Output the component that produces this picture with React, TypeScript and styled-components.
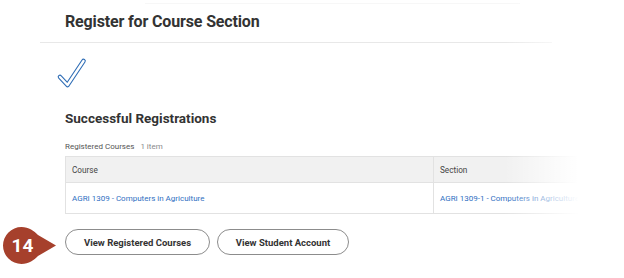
import React from "react";
import styled, { createGlobalStyle } from "styled-components";

const GlobalStyle = createGlobalStyle`
  html, body {
    margin: 0;
    padding: 0;
    background: #ffffff;
  }
  body {
    font-family: Roboto, "Liberation Sans", Arial, sans-serif;
    color: #333333;
  }
`;

const Page = styled.div`
  position: relative;
  width: 624px;
  height: 278px;
  overflow: hidden;
  background: #fff;
`;

const TopRule = styled.div`
  height: 1px;
  margin: 3px 104px 0 145px;
  background: #f7f7f7;
`;

const Header = styled.div`
  margin: 0 72px 0 40px;
  padding: 9px 0 12px 25px;
  border-bottom: 1px solid #e8e8e8;
`;

const Title = styled.h1`
  margin: 0;
  font-size: 16px;
  font-weight: 700;
  letter-spacing: -0.15px;
  color: #333;
  line-height: 17px;
`;

const Content = styled.div`
  padding: 13px 0 0 65px;
`;

const CheckWrap = styled.div`
  margin-left: -9px;
  height: 34px;
`;

const SectionTitle = styled.h2`
  margin: 20px 0 0;
  font-size: 13.5px;
  font-weight: 700;
  color: #333;
  line-height: 16px;
`;

const TableLabel = styled.div`
  margin-top: 16px;
  font-size: 8px;
  color: #555;
  display: flex;
  gap: 6px;
  line-height: 10px;
`;

const Count = styled.span`
  color: #8a8a8a;
`;

const Table = styled.div`
  margin-top: 4px;
  width: 540px;
  border: 1px solid #e2e2e2;
  border-right: none;
  display: grid;
  grid-template-columns: 367px 1fr;
`;

const HeadCell = styled.div`
  background: #f1f1f1;
  height: 25px;
  display: flex;
  align-items: center;
  padding-left: 6px;
  font-size: 8.2px;
  color: #444;
  border-bottom: 1px solid #e2e2e2;
  & + & {
    border-left: 1px solid #e2e2e2;
  }
`;

const BodyCell = styled.div<{ $divider?: boolean }>`
  height: 30px;
  display: flex;
  align-items: center;
  padding-left: 6px;
  font-size: 8px;
  color: #2f6fc2;
  white-space: nowrap;
  overflow: hidden;
  border-left: ${(p) => (p.$divider ? "1px solid #e2e2e2" : "none")};
`;

const Fade = styled.div`
  position: absolute;
  top: 0;
  right: 0;
  width: 120px;
  height: 220px;
  background: linear-gradient(to right, rgba(255, 255, 255, 0) 0%, #fff 62%);
  pointer-events: none;
`;

const ButtonRow = styled.div`
  margin-top: 15px;
  display: flex;
  gap: 7px;
`;

const PillButton = styled.button<{ $w: number }>`
  width: ${(p) => p.$w}px;
  height: 26px;
  border: 1px solid #8c8c8c;
  border-radius: 13px;
  background: #fff;
  font-family: Roboto, "Liberation Sans", Arial, sans-serif;
  font-size: 9.5px;
  font-weight: 700;
  color: #333;
  padding: 0;
  cursor: pointer;
`;

const Badge = styled.div`
  position: absolute;
  left: 3px;
  top: 227px;
  width: 53px;
  height: 37px;
`;

const BadgeText = styled.span`
  position: absolute;
  left: 1px;
  top: 0;
  width: 37px;
  height: 37px;
  display: flex;
  align-items: center;
  justify-content: center;
  color: #fff;
  font-size: 19px;
  font-weight: 700;
  font-family: Roboto, "Liberation Sans", Arial, sans-serif;
`;

const CheckIcon = () => (
  <svg width="32" height="34" viewBox="0 0 32 34">
    <path
      d="M4 21 L11.5 29 L27.5 5"
      fill="none"
      stroke="#2f6db5"
      strokeWidth="4.6"
      strokeLinecap="round"
      strokeLinejoin="round"
    />
    <path
      d="M4 21 L11.5 29 L27.5 5"
      fill="none"
      stroke="#fff"
      strokeWidth="2.4"
      strokeLinecap="round"
      strokeLinejoin="round"
    />
  </svg>
);

export default function App() {
  return (
    <>
      <GlobalStyle />
      <Page>
        <TopRule />
        <Header>
          <Title>Register for Course Section</Title>
        </Header>
        <Content>
          <CheckWrap>
            <CheckIcon />
          </CheckWrap>
          <SectionTitle>Successful Registrations</SectionTitle>
          <TableLabel>
            <span>Registered Courses</span>
            <Count>1 item</Count>
          </TableLabel>
          <Table>
            <HeadCell>Course</HeadCell>
            <HeadCell>Section</HeadCell>
            <BodyCell>AGRI 1309 - Computers in Agriculture</BodyCell>
            <BodyCell $divider>AGRI 1309-1 - Computers in Agriculture</BodyCell>
          </Table>
          <ButtonRow>
            <PillButton $w={145}>View Registered Courses</PillButton>
            <PillButton $w={132}>View Student Account</PillButton>
          </ButtonRow>
        </Content>
        <Fade />
        <Badge>
          <svg width="53" height="37" viewBox="0 0 53 37">
            <path
              d="M18.5 0 C26 0 31 4 35 8 L53 18.5 L35 29 C31 33 26 37 18.5 37 A18.5 18.5 0 0 1 18.5 0 Z"
              fill="#a6402c"
            />
          </svg>
          <BadgeText>14</BadgeText>
        </Badge>
      </Page>
    </>
  );
}
